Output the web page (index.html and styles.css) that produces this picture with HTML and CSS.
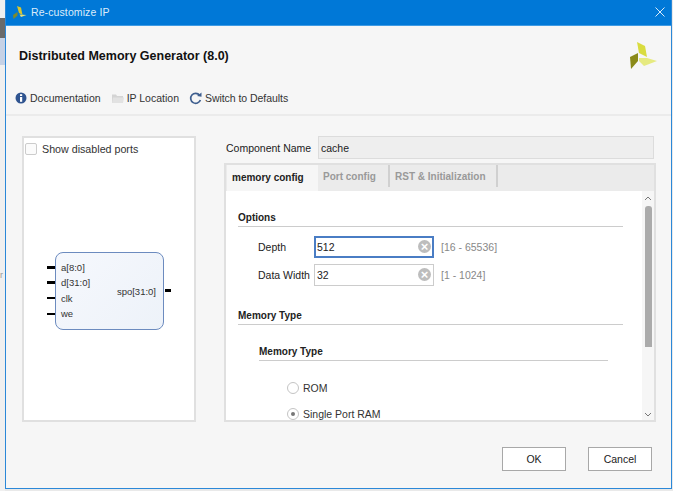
FILE: index.html
```html
<!DOCTYPE html>
<html lang="en">
<head>
<meta charset="utf-8">
<title>Re-customize IP</title>
<link rel="stylesheet" href="styles.css">
</head>
<body>
<div class="desk-strip"><span class="strip-a"></span><span class="strip-b"></span><span class="strip-text">r</span></div>
<div class="window">
  <header class="titlebar">
    <div class="title-left">
      <svg class="title-logo" viewBox="0 0 14 13" width="14" height="13"><polygon points="4,0 8,1.5 9.5,9 6,7" fill="#d9c62c"/><polygon points="6.5,8.5 13.5,9 8,11" fill="#e6e07a"/><polygon points="4.5,6 4.5,9.5 0.5,13 0,9" fill="#7f8a2a"/></svg>
      <span class="title-text">Re-customize IP</span>
    </div>
    <svg class="close" viewBox="0 0 10 10" width="10" height="10"><path d="M0.5 0.5L9.5 9.5M9.5 0.5L0.5 9.5" stroke="#fff" stroke-width="1" fill="none"/></svg>
  </header>
  <div class="ip-head">
    <h1 class="ip-title">Distributed Memory Generator (8.0)</h1>
    <svg class="ip-logo" viewBox="0 0 28 28" width="28" height="28"><polygon points="7,0 15,4 17,15 9,11" fill="#d9dc3f"/><polygon points="9,16 17,16 27,19 14,24 9,19" fill="#e6ea80"/><polygon points="8,11 8,19 1,27 0,15" fill="#8a8a18"/></svg>
  </div>
  <nav class="toolbar">
    <span class="tool"><svg viewBox="0 0 12 12" width="12" height="12"><circle cx="6" cy="6" r="5.5" fill="#2f5490"/><rect x="5" y="5" width="2.2" height="4.8" fill="#fff"/><rect x="5" y="2.2" width="2.2" height="1.8" fill="#fff"/></svg>Documentation</span>
    <span class="tool"><svg viewBox="0 0 12 11" width="12" height="11"><path d="M0 1.5H4L5 3H11V10H0Z" fill="#d4d4d4"/><path d="M1 4.5H12L11 10H0Z" fill="#e2e2e2"/></svg>IP Location</span>
    <span class="tool switch"><svg viewBox="0 0 13 13" width="13" height="13"><path d="M10.6 3.2A5 5 0 1 0 11.4 8" stroke="#3f5f8f" stroke-width="1.7" fill="none"/><polygon points="8,4 12.5,4.8 12.5,0.5" fill="#3f5f8f"/></svg>Switch to Defaults</span>
  </nav>
  <main class="content">
    <aside class="symbol-panel">
      <label class="show-ports"><span class="checkbox"></span>Show disabled ports</label>
      <div class="symbol">
        <div class="pins-left"><i class="pin thick"></i><i class="pin thick"></i><i class="pin"></i><i class="pin"></i></div>
        <div class="block">
          <div class="ports-in"><span>a[8:0]</span><span>d[31:0]</span><span>clk</span><span>we</span></div>
          <span class="port-out">spo[31:0]</span>
        </div>
        <i class="pin thick pin-out"></i>
      </div>
    </aside>
    <section class="config">
      <div class="name-row"><span class="name-label">Component Name</span><span class="name-input">cache</span></div>
      <div class="tabs-box">
        <div class="tabs">
          <span class="tab active">memory config</span>
          <span class="tab">Port config</span>
          <span class="tab">RST &amp; Initialization</span>
        </div>
        <div class="tab-body">
          <div class="scroll-content">
            <h2 class="section first">Options</h2>
            <div class="field"><span class="field-label">Depth</span><span class="field-input focus">512<i class="clear">×</i></span><span class="range">[16 - 65536]</span></div>
            <div class="field"><span class="field-label">Data Width</span><span class="field-input">32<i class="clear">×</i></span><span class="range">[1 - 1024]</span></div>
            <h2 class="section second">Memory Type</h2>
            <h3 class="subsection">Memory Type</h3>
            <div class="radio-row"><span class="radio"></span>ROM</div>
            <div class="radio-row"><span class="radio on"></span>Single Port RAM</div>
          </div>
          <div class="scrollbar">
            <svg viewBox="0 0 8 5" width="8" height="5"><path d="M1 4L4 1L7 4" stroke="#777" fill="none"/></svg>
            <div class="thumb"></div>
            <svg viewBox="0 0 8 5" width="8" height="5"><path d="M1 1L4 4L7 1" stroke="#777" fill="none"/></svg>
          </div>
        </div>
      </div>
    </section>
  </main>
  <footer class="buttons">
    <button class="btn">OK</button>
    <button class="btn">Cancel</button>
  </footer>
</div>
</body>
</html>
```
FILE: styles.css
```css
* { box-sizing: border-box; }
html, body { margin: 0; padding: 0; }
body {
  width: 673px; height: 491px; overflow: hidden;
  background: #e9e9e9;
  font-family: "Liberation Sans", Arial, sans-serif;
  font-size: 10.5px; color: #222;
  display: flex; align-items: flex-start;
}
.desk-strip { width: 5px; height: 491px; position: relative; overflow: hidden; background: #f0f0f0; }
.strip-a { position: absolute; left: 0; top: 18px; width: 5px; height: 20px; background: #6a6a6a; }
.strip-b { position: absolute; left: 0; top: 38px; width: 5px; height: 27px; background: #c6d2e6; }
.strip-text { position: absolute; left: 0; top: 270px; color: #999; font-size: 9px; }
.window {
  width: 667px; height: 489px;
  background: #f6f6f6;
  border: 1px solid #2b88d8; border-top: 0;
  display: flex; flex-direction: column;
}
.titlebar {
  height: 26px; flex: none; background: #0078d7; color: #dcecfa;
  display: flex; align-items: center; justify-content: space-between;
  padding: 0 4px 1px 7px;
  border-bottom: 1px solid #3f9be4;
}
.title-left { display: flex; align-items: center; gap: 4px; }
.title-text { font-size: 10.5px; letter-spacing: 0.1px; }
.close { opacity: .85; margin-right: 2px; }
.ip-head {
  height: 59px; flex: none;
  display: flex; align-items: center; justify-content: space-between;
  padding: 0 13px 0 13px;
}
.ip-title { margin: 0; font-size: 12.5px; font-weight: bold; color: #111; }
.toolbar {
  height: 31px; flex: none;
  display: flex; align-items: center; gap: 11px;
  padding: 0 0 3px 9px;
  border-bottom: 2px solid #ebebeb;
  color: #333;
}
.tool { display: flex; align-items: center; gap: 3px; }
.tool.switch { margin-left: -1px; letter-spacing: -0.05px; }
.content { flex: 1; display: flex; padding: 20px 0 0 16px; min-height: 0; }
.symbol-panel {
  width: 174px; height: 286px; flex: none;
  background: #fff; border: 2px solid #e0e0e0;
}
.show-ports { display: flex; align-items: center; gap: 5px; padding: 5px 0 0 1px; color: #333; font-size: 10.7px; }
.checkbox { width: 12px; height: 12px; border: 1px solid #ccc; border-radius: 2px; background: #fbfbfb; }
.symbol { display: flex; align-items: flex-start; margin: 97px 0 0 23px; }
.pins-left { width: 8px; padding-top: 13.5px; display: flex; flex-direction: column; gap: 12.2px; }
.pin { display: block; width: 8px; height: 2px; background: #000; margin: 1px 0; }
.pin.thick { height: 3px; margin: 0; }
.block {
  width: 109px; height: 78px;
  background: linear-gradient(135deg, #f6f8fd, #edf2f9);
  border: 1px solid #6c8bbf; border-radius: 8px;
  display: flex; align-items: center; justify-content: space-between;
  padding: 0 7px 0 5px; color: #333; font-size: 9.5px;
}
.ports-in { display: flex; flex-direction: column; gap: 3.3px; line-height: 12px; }
.pin.thick.pin-out { margin: 37px 0 0 1px; width: 6px; flex: none; }
.config { margin-left: 28px; width: 432px; display: flex; flex-direction: column; }
.name-row { display: flex; align-items: center; height: 23px; padding-left: 2px; margin-right: 2px; }
.name-label { width: 92px; flex: none; color: #222; }
.name-input {
  flex: 1; height: 23px; background: #eeeeee; border: 1px solid #dcdcdc;
  display: flex; align-items: center; padding-left: 2px; color: #222;
}
.tabs-box { margin-top: 4px; height: 259px; border: 2px solid #e0e0e0; display: flex; flex-direction: column; }
.tabs { height: 26px; flex: none; background: #ebebeb; display: flex; padding-left: 1px; }
.tab {
  padding: 1px 0 1px 5px; color: #999; font-weight: bold; font-size: 10px; white-space: nowrap;
  display: flex; align-items: center; height: 22px;
  border-right: 2px solid #d0d0d0;
}
.tab.active {
  color: #222; background: #f6f6f6; width: 91px; height: 26px;
  border-right: 0; padding: 0 0 2px 5px;
}
.tab:nth-child(2) { width: 72px; }
.tab:nth-child(3) { width: 108px; }
.tab-body { flex: 1; background: #fff; display: flex; min-height: 0; overflow: hidden; }
.scroll-content { flex: 1; padding: 0 19px 0 12px; min-width: 0; }
.section { margin: 0; font-size: 10px; color: #222; border-bottom: 1px solid #ccc; }
.section.first { margin-top: 20px; padding-bottom: 2px; line-height: 13px; }
.section.second { margin-top: 23px; padding-bottom: 1px; line-height: 14px; }
.subsection { margin: 20px 15px 0 21px; font-size: 10px; color: #222; border-bottom: 1px solid #ccc; padding-bottom: 1px; line-height: 14px; }
.field { display: flex; align-items: center; height: 23px; margin-bottom: 5px; padding-left: 20px; }
.field:first-of-type { margin-top: 8px; }
.field-label { width: 56px; flex: none; color: #222; }
.field-input {
  width: 120px; height: 22px; flex: none; background: #fff; border: 1px solid #ccc;
  display: flex; align-items: center; justify-content: space-between; padding: 0 2px; color: #222;
}
.field-input.focus { border: 2px solid #4a7dc4; padding: 0 1px; }
.clear {
  width: 13px; height: 13px; border-radius: 50%; background: #bdbdbd; color: #fff;
  font-style: normal; font-weight: bold; font-size: 13px; line-height: 13px; text-align: center;
}
.range { margin-left: 7px; color: #888; }
.radio-row { display: flex; align-items: center; gap: 4px; height: 13px; margin: 0 0 13px 49px; color: #333; }
.subsection + .radio-row { margin-top: 20px; }
.radio { width: 12px; height: 12px; border: 1px solid #c4c4c4; border-radius: 50%; background: #fff; position: relative; flex: none; }
.radio.on::after { content: ""; position: absolute; left: 3px; top: 3px; width: 4px; height: 4px; border-radius: 50%; background: #777; }
.scrollbar {
  width: 12px; flex: none; background: #f6f6f6;
  display: flex; flex-direction: column; align-items: center; padding: 5px 0 3px;
}
.thumb { width: 7px; height: 141px; margin: 5px 0 auto; background: #ababab; border-radius: 3px 3px 0 0; }
.buttons { display: flex; justify-content: flex-end; gap: 22px; padding: 0 19px 11px 0; height: 47px; align-items: center; }
.btn {
  width: 64px; height: 24px; background: #fff; border: 1px solid #a8a8a8;
  font: 10.5px "Liberation Sans", Arial, sans-serif; color: #222; padding: 0;
}
```
